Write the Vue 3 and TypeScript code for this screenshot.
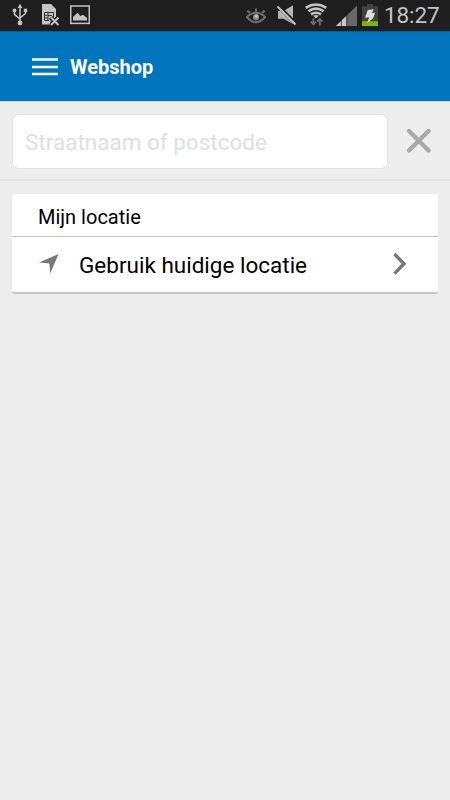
<script setup lang="ts">
import { ref } from 'vue'

const query = ref<string>('')
const clock = '18:27'

function clearQuery(): void {
  query.value = ''
}
</script>

<template>
  <div class="screen">
    <div class="status">
      <div class="group notices">
        <svg width="16" height="24" viewBox="12 3 16 24" fill="none" stroke="#c4c4c4" stroke-width="1.5">
          <path d="M20 7V24M14.5 11V14.3L20 19M25.5 11V13.5L20 18" />
          <path d="M20 3.6L22.3 8H17.7Z" fill="#c4c4c4" stroke="none" />
          <circle cx="20" cy="23" r="2.4" fill="#c4c4c4" stroke="none" />
          <circle cx="14.5" cy="10.5" r="1.9" fill="#c4c4c4" stroke="none" />
          <path d="M23.8 8.7H27.2V12H23.8Z" fill="#c4c4c4" stroke="none" />
        </svg>
        <svg width="20" height="24" viewBox="40 3 20 24">
          <path d="M42 4H51L56 9V17L53 19L51 17L49 19L51 21L49.5 24.5H42Z" fill="#c4c4c4" />
          <path d="M44.5 12.5H53.5V17M44.5 12.5V20.5H49M44.5 15.3H47.5M44.5 18H48M48 12.5V20M48 15.5H52" fill="none" stroke="#333" stroke-width="1" />
          <path d="M51 17.5L58.5 25M58.5 17.5L51 25" stroke="#1f1f1f" stroke-width="4" />
          <path d="M51 17.5L58.5 25M58.5 17.5L51 25" stroke="#c4c4c4" stroke-width="2" />
        </svg>
        <svg width="20" height="24" viewBox="70 3 20 24">
          <rect x="70.75" y="6" width="18.5" height="17.4" fill="none" stroke="#c4c4c4" stroke-width="1.5" />
          <path d="M73 20.5V17L77.5 12.8L80.5 16L83 14.8L87 18V20.5Z" fill="#c4c4c4" />
        </svg>
      </div>
      <div class="group system">
        <svg class="eye" width="20" height="24" viewBox="246 3 20 24" fill="none" stroke="#707070" stroke-width="1.9">
          <path d="M246.8 17Q256 8.5 265.2 17Q256 27.5 246.8 17Z" />
          <path d="M247.3 10.5L250 13M256 8.5V12M264.7 10.5L262 13" />
          <circle cx="256" cy="17.3" r="3" fill="#8b8b8b" stroke="none" />
          <circle cx="256.5" cy="16" r="1.7" fill="#c4c4c4" stroke="none" />
        </svg>
        <svg class="mute" width="20" height="24" viewBox="277 3 20 24">
          <path d="M278 11H283.5L293 5.3V24L283.5 18.7H278Z" fill="#b4b4b4" />
          <path d="M278 6L296 24" stroke="#1f1f1f" stroke-width="4" />
          <path d="M277.5 6.5L295.5 24.5" stroke="#c4c4c4" stroke-width="2" />
        </svg>
        <svg class="wifi" width="24" height="24" viewBox="304 3 24 24" fill="none" stroke="#c4c4c4" stroke-width="2.6">
          <path d="M305.8 7.8Q316 1.3 326.2 7.8M308.4 11.2Q316 6 323.6 11.2M311 14.4Q316 11 321 14.4" />
          <path d="M313.2 15.8Q316 14 318.8 15.8L316 18.5Z" fill="#c4c4c4" stroke="none" />
          <path d="M313.4 18.5V24M310.8 21.5L313.4 24.5L316 21.5M319.8 25.5V19.5M317.2 21.5L319.8 18.8L322.4 21.5" stroke="#707070" stroke-width="1.8" />
        </svg>
        <svg class="signal" width="21" height="24" viewBox="336 3 21 24">
          <path d="M357 5.5V26H336Z" fill="#686868" />
          <path d="M346.5 15.7V26H336Z" fill="#c8c8c8" />
          <path d="M341.3 19V26M346.8 14V26" stroke="#1f1f1f" stroke-width=".8" />
        </svg>
        <svg class="battery" width="16" height="24" viewBox="362 3 16 24">
          <path d="M367 4H373V6.2H378V26H362V6.2H367Z" fill="#414141" />
          <path d="M362 21.2H378V26H362Z" fill="#78b800" />
          <path d="M367.8 10L373.8 9.3L371.8 13.2L375.2 12.6L373 18.5L367 23L369.3 17.2L365 17.8Z" fill="#dedede" />
        </svg>
        <span class="clock">{{ clock }}</span>
      </div>
    </div>

    <header class="bar">
      <svg class="menu" width="26" height="18" viewBox="0 0 26 18">
        <path d="M0 1.5H26M0 9H26M0 16H26" stroke="#fff" stroke-width="2.5" />
      </svg>
      <h1>Webshop</h1>
    </header>

    <div class="search">
      <input v-model="query" type="text" placeholder="Straatnaam of postcode" />
      <button type="button" aria-label="Wissen" @click="clearQuery">
        <svg width="26" height="26" viewBox="0 0 26 26">
          <path d="M3 3L22.5 22.5M22.5 3L3 22.5" stroke="#a9a9a9" stroke-width="4.3" stroke-linecap="round" />
        </svg>
      </button>
    </div>

    <section class="card">
      <h2>Mijn locatie</h2>
      <div class="row">
        <svg class="arrow" width="20" height="20" viewBox="0 0 20 20">
          <path d="M0 8.6L19.6 0L11.2 19.4L10.4 9.6Z" fill="#77797c" />
        </svg>
        <span class="label">Gebruik huidige locatie</span>
        <svg class="chevron" width="14" height="24" viewBox="0 0 14 24">
          <path d="M1.5 2L11 11.8L1.5 21.6" fill="none" stroke="#75777a" stroke-width="3.4" />
        </svg>
      </div>
    </section>
  </div>
</template>

<style>
body {
  background: #ededed;
}
</style>

<style scoped>
.screen {
  width: 450px;
  height: 800px;
  overflow: hidden;
  background: #ededed;
  font-family: Roboto, "Liberation Sans", sans-serif;
  color: #000;
}
svg {
  display: block;
  flex: none;
}
.status {
  display: flex;
  justify-content: space-between;
  box-sizing: border-box;
  height: 31px;
  padding: 3px 11px 0 12px;
  background: #1f1f1f;
}
.group {
  display: flex;
}
.notices {
  gap: 12px;
}
.notices svg:last-child {
  margin-left: -2px;
}
.mute {
  margin-left: 11px;
}
.wifi {
  margin-left: 7px;
}
.signal {
  margin-left: 8px;
}
.battery {
  margin-left: 5px;
}
.clock {
  width: 55px;
  margin-left: 6px;
  color: #c4c4c4;
  font-size: 22.5px;
  letter-spacing: -0.1px;
  line-height: 25px;
  white-space: nowrap;
}
.bar {
  display: flex;
  align-items: center;
  box-sizing: border-box;
  height: 70px;
  padding: 1px 32px 0;
  border-top: 1px solid #075f99;
  background: #0075bd;
}
h1 {
  margin: 0 0 0 12px;
  color: #fff;
  font-size: 20px;
  font-weight: 700;
  line-height: 24px;
}
.search {
  display: flex;
  align-items: flex-start;
  box-sizing: border-box;
  height: 80px;
  padding: 12px 12px 0;
  border-top: 1px solid #d2dbe1;
  border-bottom: 2px solid #e1e1e1;
}
input {
  box-sizing: border-box;
  width: 376px;
  height: 55px;
  padding: 1px 12px 0;
  border: 1px solid #e3e3e3;
  border-radius: 7px;
  outline: none;
  background: #fff;
  font: 22.5px/30px Roboto, "Liberation Sans", sans-serif;
}
input::placeholder {
  color: #dedfe1;
  opacity: 1;
}
button {
  margin: 14px 0 0 18px;
  padding: 0;
  border: 0;
  background: none;
}
.card {
  box-sizing: border-box;
  height: 100px;
  margin: 13px 12px 0;
  border-bottom: 2px solid #c6c6c6;
  border-radius: 3px;
  background: #fff;
}
h2 {
  box-sizing: border-box;
  height: 43px;
  margin: 0;
  padding: 2px 26px 0;
  border-bottom: 1px solid #c3c3c3;
  font-size: 20px;
  font-weight: 400;
  line-height: 42px;
}
.row {
  display: flex;
  align-items: center;
  height: 54px;
  padding: 0 31px 0 27px;
}
.arrow {
  margin-top: -1px;
}
.label {
  margin: 1px 0 0 20px;
  font-size: 22.5px;
  line-height: 30px;
  white-space: nowrap;
}
.chevron {
  margin-left: auto;
}
</style>
